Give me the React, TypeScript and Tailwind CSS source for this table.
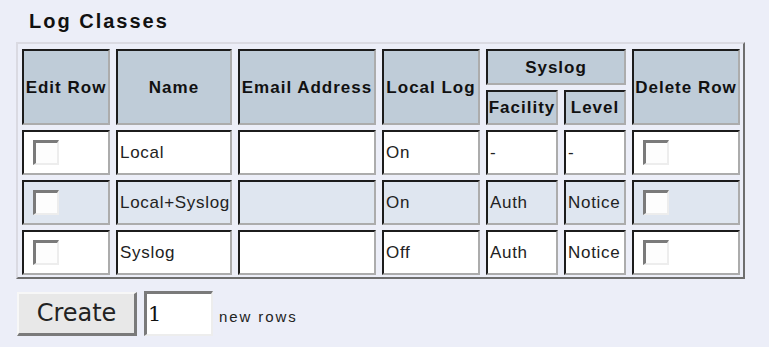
const rows = [
  { name: "Local", email: "", local: "On", facility: "-", level: "-", shade: false },
  { name: "Local+Syslog", email: "", local: "On", facility: "Auth", level: "Notice", shade: true },
  { name: "Syslog", email: "", local: "Off", facility: "Auth", level: "Notice", shade: false },
];

const cellEdge =
  "border-2 border-t-[#1c1c1c] border-l-[#1c1c1c] border-r-[#acacac] border-b-[#acacac]";

function HeadCell({ label, className = "" }: { label: string; className?: string }) {
  return (
    <div
      className={`${cellEdge} ${className} flex items-center justify-center bg-[#bfccd8] text-center text-[17px] font-bold leading-none tracking-[1px] text-[#111]`}
    >
      {label}
    </div>
  );
}

function Checkbox() {
  return (
    <span className="ml-[7px] block h-[25px] w-[26px] border-t-[3px] border-l-[3px] border-r-2 border-b-2 border-t-[#7a7a7a] border-l-[#7a7a7a] border-r-[#ededed] border-b-[#ededed] bg-[#fdfdfd]" />
  );
}

function DataCell({ shade, children }: { shade: boolean; children?: React.ReactNode }) {
  return (
    <div
      className={`${cellEdge} flex items-center pl-[2px] text-[17px] leading-none tracking-[0.7px] text-[#222] ${shade ? "bg-[#dfe6f0]" : "bg-white"}`}
    >
      {children}
    </div>
  );
}

export default function App() {
  return (
    <div className="h-[347px] w-[769px] bg-[#eceef8] font-['Liberation_Sans',Arial,sans-serif]">
      <div className="h-[42px] pl-[29px] pt-[11px] text-[20px] font-bold leading-[20px] tracking-[2px] text-[#111]">
        Log Classes
      </div>

      <div className="ml-[16px] w-[729px] border-2 border-t-[#dadae2] border-l-[#dadae2] border-r-[#6e6e6e] border-b-[#6e6e6e] pb-[2px] pl-[4px] pr-[3px] pt-[5px]">
        <div className="grid grid-cols-[88px_116px_138px_98px_72px_62px_108px] grid-rows-[36px_35px_45px_45px_45px] gap-x-[6px] gap-y-[5px]">
          <HeadCell label="Edit Row" className="row-span-2" />
          <HeadCell label="Name" className="row-span-2" />
          <HeadCell label="Email Address" className="row-span-2" />
          <HeadCell label="Local Log" className="row-span-2" />
          <HeadCell label="Syslog" className="col-span-2" />
          <HeadCell label="Delete Row" className="row-span-2" />
          <HeadCell label="Facility" />
          <HeadCell label="Level" />

          {rows.map((row) => [
            <DataCell key={row.name + "-edit"} shade={row.shade}>
              <Checkbox />
            </DataCell>,
            <DataCell key={row.name + "-name"} shade={row.shade}>{row.name}</DataCell>,
            <DataCell key={row.name + "-email"} shade={row.shade}>{row.email}</DataCell>,
            <DataCell key={row.name + "-local"} shade={row.shade}>{row.local}</DataCell>,
            <DataCell key={row.name + "-facility"} shade={row.shade}>{row.facility}</DataCell>,
            <DataCell key={row.name + "-level"} shade={row.shade}>{row.level}</DataCell>,
            <DataCell key={row.name + "-delete"} shade={row.shade}>
              <Checkbox />
            </DataCell>,
          ])}
        </div>
      </div>

      <div className="ml-[17px] mt-[12px] flex items-center">
        <button
          type="button"
          className="h-[44px] w-[120px] border-t-2 border-l-2 border-r-[3px] border-b-[3px] border-t-[#f7f7f7] border-l-[#f7f7f7] border-r-[#7a7a7a] border-b-[#7a7a7a] bg-[#e8e8e8] font-['DejaVu_Sans',sans-serif] text-[24px] leading-none text-[#222]"
        >
          Create
        </button>
        <input
          defaultValue="1"
          className="ml-[7px] h-[45px] w-[69px] border-t-[3px] border-l-[3px] border-r-2 border-b-2 border-t-[#7a7a7a] border-l-[#7a7a7a] border-r-[#ededed] border-b-[#ededed] bg-white pl-[1px] font-['DejaVu_Serif',serif] text-[21px] text-[#111] outline-none"
        />
        <span className="ml-[6px] mt-[8px] text-[15px] tracking-[1.9px] text-[#222]">new rows</span>
      </div>
    </div>
  );
}
